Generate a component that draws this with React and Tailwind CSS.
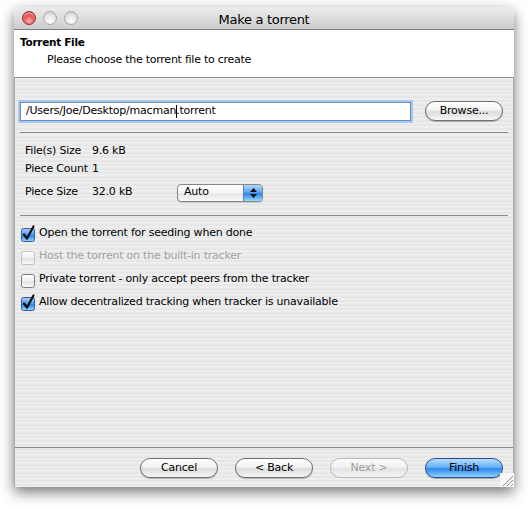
import React from 'react';

const font = "font-['DejaVu_Sans',sans-serif]";

// aqua push button
const PushButton = ({ label, kind = 'normal' }) => {
    const skins = {
        normal: 'border-[#6f6f6f] text-black bg-[linear-gradient(#ffffff,#f3f3f3_45%,#dcdcdc_55%,#f6f6f6)] shadow-[0_1px_1px_rgba(0,0,0,0.25)]',
        disabled: 'border-[#b9b9b9] text-[#9c9c9c] bg-[linear-gradient(#fbfbfb,#f1f1f1_45%,#e4e4e4_55%,#f3f3f3)]',
        primary: 'border-[#2c4d95] text-black bg-[linear-gradient(#b8dcfd,#69b1f6_45%,#2f86ea_55%,#92d4ff)] shadow-[0_1px_1px_rgba(0,0,0,0.3)]',
    };
    return (
        <div className={`flex h-[20px] w-[78px] items-center justify-center rounded-full border text-[11px] tracking-[-0.2px] ${skins[kind]}`}>
            {label}
        </div>
    );
};

const Checkbox = ({ checked, disabled }) => (
    <svg width="16" height="16" viewBox="0 0 16 16" className="shrink-0 overflow-visible">
        <defs>
            <linearGradient id="cbOn" x1="0" y1="0" x2="0" y2="1">
                <stop offset="0" stopColor="#a7cff8" />
                <stop offset="0.5" stopColor="#4c9af0" />
                <stop offset="0.55" stopColor="#2d82e6" />
                <stop offset="1" stopColor="#9fdcff" />
            </linearGradient>
            <linearGradient id="cbOff" x1="0" y1="0" x2="0" y2="1">
                <stop offset="0" stopColor="#ffffff" />
                <stop offset="0.5" stopColor="#f1f1f1" />
                <stop offset="0.55" stopColor="#e2e2e2" />
                <stop offset="1" stopColor="#fafafa" />
            </linearGradient>
        </defs>
        <rect
            x="1.5" y="2.5" width="13" height="13" rx="2"
            fill={checked ? 'url(#cbOn)' : 'url(#cbOff)'}
            stroke={checked ? '#3a5d9a' : disabled ? '#c2c2c2' : '#7c7c7c'}
        />
        {checked && (
            <path d="M4 8.5 L7 12.5 L13.5 0.5" fill="none" stroke="#111" strokeWidth="2.2" strokeLinecap="round" strokeLinejoin="round" />
        )}
    </svg>
);

const Light = ({ red }) => (
    <div
        className={
            red
                ? 'h-[14px] w-[14px] rounded-full border border-[#9b2f2f] bg-[radial-gradient(circle_at_50%_75%,#ffb0b0,#e54848_55%,#b21f1f)] shadow-[inset_0_2px_2px_rgba(255,255,255,0.5)]'
                : 'h-[14px] w-[14px] rounded-full border border-[#a9a9a9] bg-[radial-gradient(circle_at_50%_75%,#ffffff,#e4e4e4_55%,#c4c4c4)]'
        }
    />
);

export default function App() {
    return (
        <div className={`h-[507px] w-[528px] bg-white pl-[14px] pt-[7px] ${font}`}>
            <div className="relative flex h-[480px] w-[500px] flex-col rounded-t-[6px] shadow-[0_5px_14px_rgba(0,0,0,0.55)]">
                {/* title bar */}
                <div className="relative flex h-[23px] items-center rounded-t-[6px] border-b border-[#7d7d7d] bg-[linear-gradient(#ececec,#cdcdcd)] px-[8px]">
                    <div className="flex items-center gap-[7px]">
                        <Light red />
                        <Light />
                        <Light />
                    </div>
                    <div className="absolute inset-x-0 top-[3px] text-center text-[13px] tracking-[-0.3px] text-black">
                        Make a torrent
                    </div>
                </div>

                {/* header */}
                <div className="h-[48px] border-b border-[#8f8f8f] bg-white pl-[6px] pt-[5px] text-[11px] text-black">
                    <div className="text-[10.5px] font-bold leading-[14px] tracking-[-0.3px]">Torrent File</div>
                    <div className="mt-[4px] pl-[27px] leading-[14px] tracking-[-0.25px]">
                        Please choose the torrent file to create
                    </div>
                </div>

                {/* body */}
                <div className="flex flex-1 flex-col border-x border-[#a8a8a8] bg-[repeating-linear-gradient(180deg,#eeeeee_0px,#eeeeee_2px,#e7e7e7_2px,#e7e7e7_4px)] text-[11px] tracking-[-0.22px] text-black">
                    <div className="mt-[22px] flex h-[22px] items-center pl-[5px] pr-[10px]">
                        <div className="flex h-[19px] w-[391px] items-center border border-[#6b8ec3] bg-white pl-[5px] shadow-[0_0_0_2px_#a8c7ec]">
                            <span>/Users/Joe/Desktop/macman</span>
                            <span className="inline-block h-[13px] w-px -mr-px bg-black" />
                            <span>.torrent</span>
                        </div>
                        <div className="ml-auto">
                            <PushButton label="Browse..." />
                        </div>
                    </div>

                    <div className="mx-[5px] mt-[10px] h-px bg-[#8c8c8c]" />

                    <div className="mt-[9px] pl-[10px]">
                        <div className="flex h-[18px] items-center">
                            <span className="w-[67px]">File(s) Size</span>
                            <span>9.6 kB</span>
                        </div>
                        <div className="flex h-[18px] items-center">
                            <span className="w-[67px]">Piece Count</span>
                            <span>1</span>
                        </div>
                        <div className="mt-[5px] flex h-[19px] items-center">
                            <span className="w-[67px]">Piece Size</span>
                            <span className="w-[85px]">32.0 kB</span>
                            <div className="flex h-[18px] w-[86px] items-center overflow-hidden rounded-[4px] border border-[#868686] bg-[linear-gradient(#ffffff,#f4f4f4_50%,#e6e6e6_55%,#f9f9f9)] shadow-[0_1px_1px_rgba(0,0,0,0.15)]">
                                <span className="pl-[6px]">Auto</span>
                                <div className="ml-auto flex h-full w-[19px] flex-col items-center justify-center gap-[2px] border-l border-[#5b7fb8] bg-[linear-gradient(#b3d7fb,#5ea6f3_45%,#2f83e8_55%,#9bd8ff)]">
                                    <svg width="7" height="4" viewBox="0 0 7 4"><path d="M0 4 L3.5 0 L7 4 Z" fill="#111" /></svg>
                                    <svg width="7" height="4" viewBox="0 0 7 4"><path d="M0 0 L3.5 4 L7 0 Z" fill="#111" /></svg>
                                </div>
                            </div>
                        </div>
                    </div>

                    <div className="mx-[5px] mt-[13px] h-px bg-[#8c8c8c]" />

                    <div className="mt-[6px] flex flex-col pl-[5px]">
                        <label className="flex h-[23px] items-center gap-[3px]">
                            <Checkbox checked />
                            <span>Open the torrent for seeding when done</span>
                        </label>
                        <label className="flex h-[23px] items-center gap-[3px] text-[#a3a3a3]">
                            <Checkbox disabled />
                            <span>Host the torrent on the built-in tracker</span>
                        </label>
                        <label className="flex h-[23px] items-center gap-[3px]">
                            <Checkbox />
                            <span>Private torrent - only accept peers from the tracker</span>
                        </label>
                        <label className="flex h-[23px] items-center gap-[3px]">
                            <Checkbox checked />
                            <span>Allow decentralized tracking when tracker is unavailable</span>
                        </label>
                    </div>

                    <div className="flex-1" />

                    <div className="h-px bg-[#8c8c8c]" />
                    <div className="mb-[9px] mt-[10px] flex items-center justify-end gap-[17px] pr-[10px]">
                        <PushButton label="Cancel" />
                        <PushButton label="< Back" />
                        <PushButton label="Next >" kind="disabled" />
                        <PushButton label="Finish" kind="primary" />
                    </div>
                </div>

                {/* resize grip */}
                <svg width="14" height="14" viewBox="0 0 14 14" className="absolute bottom-0 right-0">
                    <rect width="14" height="14" fill="#f7f7f7" />
                    <path d="M3 13 L13 3 M7 13 L13 7 M11 13 L13 11" stroke="#8a8a8a" strokeWidth="1" />
                </svg>
            </div>
        </div>
    );
}
